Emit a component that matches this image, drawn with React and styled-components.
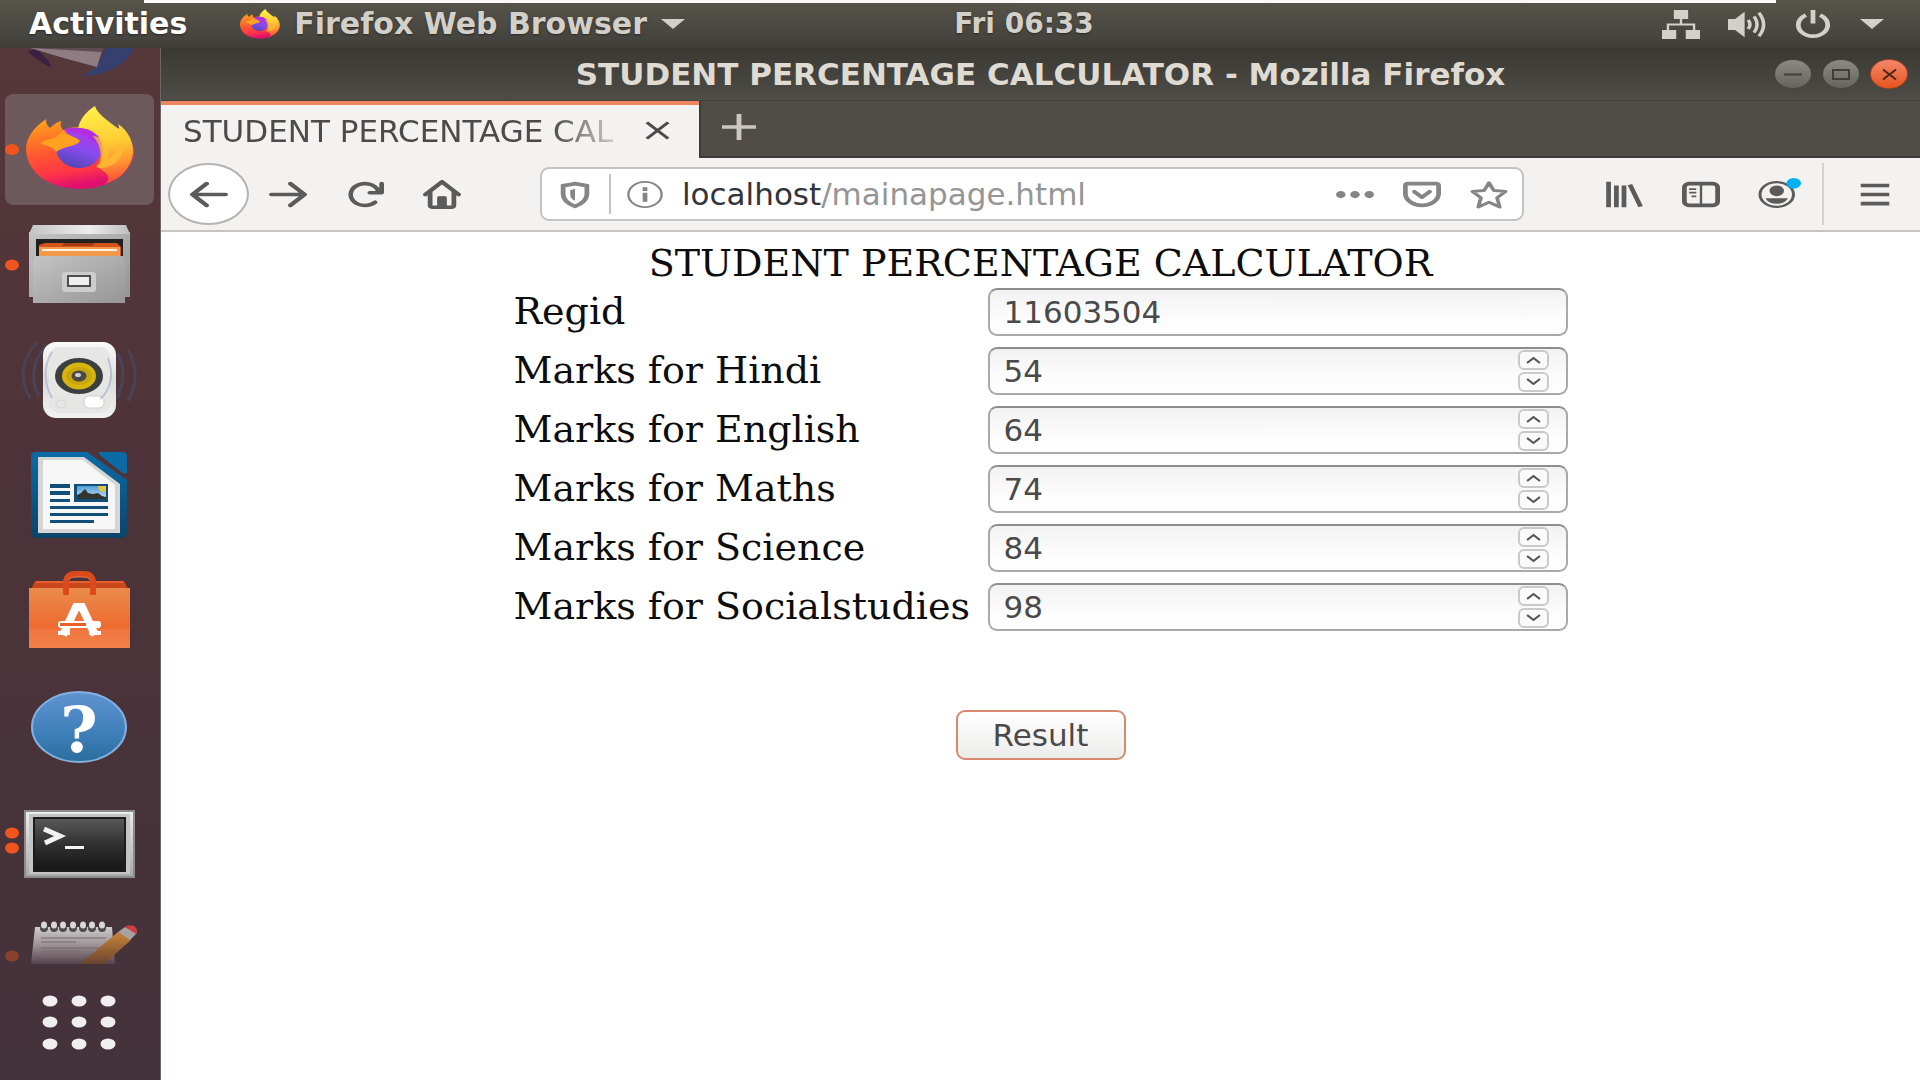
import React, { useState } from 'react';
import styled, { createGlobalStyle, css } from 'styled-components';

const GlobalStyle = createGlobalStyle`
  *, *::before, *::after { box-sizing: border-box; }
  body { margin: 0; background: #fff; }
  button { font: inherit; color: inherit; border: 0; padding: 0; background: none; }
`;

const SANS = "'DejaVu Sans', 'Noto Sans', sans-serif";
const SERIF = "'DejaVu Serif', serif";

/* ---------- desktop ---------- */

const Desktop = styled.div`
  min-height: 100vh;
  display: grid;
  grid-template-rows: 48px 1fr;
  font-family: ${SANS};
  background: #fff;
`;

const TopPanel = styled.header`
  display: flex;
  flex-direction: column;
  background: linear-gradient(#57544a, #45443e 80%, #3e3d38);
  color: #d3d0c9;
  font-size: 30px;
  line-height: 36px;
  font-weight: bold;
`;

const PanelEdge = styled.div`
  height: 3px;
  margin: 0 144px;
  background: #fafafa;
`;

const PanelRow = styled.div`
  display: flex;
  align-items: flex-start;
  height: 45px;
  padding-top: 3px;
`;

const PanelLeft = styled.div`
  flex: 1 0 164px;
  display: flex;
  align-items: center;
  gap: 14px;
  padding-left: 29px;
`;

const PanelRight = styled.div`
  flex: 1 0 0;
  display: flex;
  align-items: center;
  justify-content: flex-end;
  gap: 28px;
  height: 36px;
  padding-right: 36px;
`;

const PanelButton = styled.button`
  display: flex;
  align-items: center;
  gap: 14px;
  color: ${(p) => (p.$bright ? '#fff' : '#d3d0c9')};
  font-size: ${(p) => (p.$small ? '28px' : '30px')};
  text-shadow: 0 1px 2px #2a2926;
  margin-right: ${(p) => (p.$bright ? '39px' : '0')};
`;

const Body = styled.div`
  display: grid;
  grid-template-columns: 161px minmax(0, 1fr);
`;

/* ---------- dock ---------- */

const Dock = styled.nav`
  display: flex;
  flex-direction: column;
  background: linear-gradient(#56373a, #4c3339 45%, #44323a);
  border-right: 1px solid #6d6568;
`;

const DockItem = styled.button`
  display: block;
  height: ${(p) => p.$height || 116}px;
  overflow: hidden;

  svg { display: block; width: 160px; height: 100%; }
`;

/* ---------- browser window ---------- */

const Window = styled.div`
  display: flex;
  flex-direction: column;
  min-width: 0;
`;

const TitleBar = styled.div`
  display: grid;
  grid-template-columns: 1fr auto 1fr;
  align-items: center;
  height: 52px;
  padding-right: 12px;
  background: linear-gradient(#3a3934, #4c4a44 90%, #504d46);
  color: #dfdbd2;
`;

const WindowTitle = styled.h1`
  grid-column: 2;
  margin: 0 0 0 12px;
  font-size: 31px;
  line-height: 36px;
  font-weight: bold;
`;

const WindowButtons = styled.div`
  display: flex;
  justify-content: flex-end;
  gap: 10px;
`;

const WindowButton = styled.button`
  width: 38px;
  height: 30px;
  border-radius: 50%;
  border: 1px solid ${(p) => (p.$close ? '#a8431f' : '#45443f')};
  background: ${(p) => (p.$close ? 'linear-gradient(#f2886a, #e9541f)' : 'linear-gradient(#8b8a83, #65645e)')};

  svg { display: block; width: 36px; height: 28px; }
`;

const TabStrip = styled.div`
  display: flex;
  height: 58px;
  background: #504d46;
  border-top: 1px solid #46433d;
`;

const Tab = styled.div`
  display: flex;
  align-items: center;
  width: 538px;
  padding: 0 29px 2px 22px;
  background: #f3f2f1;
  border-top: 4px solid #ee8561;
  color: #4b4b4b;
`;

const TabLabel = styled.span`
  flex: 1;
  white-space: nowrap;
  font-size: 31px;
  line-height: 36px;
  margin-right: 12px;
  mask-image: linear-gradient(to right, #000 82%, transparent);
`;

const TabStripRest = styled.div`
  flex: 1;
  display: flex;
  align-items: center;
  padding: 0 21px 4px;
  border-left: 2px solid #3c3b37;
  border-bottom: 2px solid #3c3b37;
`;

const NewTabButton = styled.button`
  color: #cbc7bf;
`;

const Toolbar = styled.div`
  display: flex;
  align-items: center;
  height: 74px;
  padding: 0 7px;
  background: #f3f2f1;
  border-bottom: 2px solid #c7c5c3;
  color: #5b5b5b;
`;

const BackButton = styled.button`
  display: grid;
  place-items: center;
  width: 81px;
  height: 62px;
  border: 2px solid #b5b3b1;
  border-radius: 50%;
  background: #fff;
`;

const ToolButton = styled.button`
  display: grid;
  place-items: center;
  width: 77px;
  height: 62px;
`;

const ToolDivider = styled.div`
  width: 2px;
  height: 62px;
  margin: 0 12px 0 6px;
  background: #d3d1cf;
`;

const AddressBar = styled.div`
  flex: 1;
  display: flex;
  align-items: center;
  height: 54px;
  margin: 0 61px 0 60px;
  padding: 0 14px;
  background: #fff;
  border: 2px solid #c6c4c2;
  border-radius: 9px;
  color: #858585;
`;

const AddressDivider = styled.div`
  width: 2px;
  height: 40px;
  margin: 0 15px;
  background: #c2c2c2;
`;

const AddressText = styled.span`
  flex: 1;
  margin-left: 18px;
  font-size: 31px;
  line-height: 40px;
  color: #959595;

  strong { font-weight: normal; color: #33333b; }
`;

const AddressActions = styled.div`
  display: flex;
  gap: 29px;
`;

/* ---------- page ---------- */

const Page = styled.main`
  flex: 1;
  display: flex;
  justify-content: center;
  padding: 10px 16px;
  background: #fff;
  color: #0d0d0d;
  font-family: ${SERIF};
`;

const Form = styled.form`
  display: flex;
  flex-direction: column;
  align-items: center;
`;

const FormTitle = styled.h2`
  margin: 0 0 4px;
  font-size: 38px;
  line-height: 42px;
  font-weight: normal;
`;

const Fields = styled.div`
  display: grid;
  grid-template-columns: 474px 580px;
  row-gap: 11px;
`;

const FieldLabel = styled.label`
  font-size: 38px;
  line-height: 46px;
  white-space: nowrap;
`;

const FieldBox = styled.div`
  display: flex;
  height: 48px;
  padding-right: 17px;
  border: 2px solid #a9a9a9;
  border-top-color: #8d8d8d;
  border-radius: 9px;
  background: linear-gradient(#f2f2f2, #fdfdfd 70%);
`;

const FieldInput = styled.input`
  flex: 1;
  min-width: 0;
  border: 0;
  outline: 0;
  padding: 0 14px;
  background: none;
  color: #4a4a4a;
  font-family: ${SANS};
  font-size: 31px;
  appearance: textfield;

  &::-webkit-inner-spin-button, &::-webkit-outer-spin-button {
    appearance: none;
    margin: 0;
  }
`;

const Stepper = styled.div`
  display: flex;
  flex-direction: column;
  justify-content: space-between;
  padding: 1px 0;
`;

const StepButton = styled.button`
  display: grid;
  place-items: center;
  width: 31px;
  height: 20px;
  border: 2px solid #c9c9c9;
  border-radius: 6px;
  background: #fafafa;
`;

const ResultButton = styled.button`
  width: 170px;
  height: 50px;
  margin-top: 79px;
  border: 2px solid #d58a70;
  border-radius: 9px;
  background: linear-gradient(#fff, #ececeb);
  color: #4a4a4a;
  font-family: ${SANS};
  font-size: 31px;
`;

/* ---------- icons ---------- */

const GlyphSvg = styled.svg`
  display: block;
  flex: none;
  width: ${(p) => p.$w || 38}px;
  height: ${(p) => p.$h || 29}px;
  ${(p) => p.$line && css`
    fill: none;
    stroke: currentColor;
    stroke-width: ${p.$line};
  `}
`;

const Glyph = ({ children, w, h, line, box = '0 0 16 16' }) => (
  <GlyphSvg $w={w} $h={h} $line={line} viewBox={box} preserveAspectRatio="none" fill="currentColor" aria-hidden="true">
    {children}
  </GlyphSvg>
);

const Caret = () => (
  <Glyph w={24} h={10} box="0 0 10 5"><path d="M0 0h10L5 5z" /></Glyph>
);

const FirefoxArt = ({ id }) => (
  <g>
    <defs>
      <linearGradient id={`${id}-body`} x1="0" y1="0" x2="0.25" y2="1">
        <stop offset="0.1" stopColor="#ff9a1c" />
        <stop offset="0.5" stopColor="#ff5a30" />
        <stop offset="0.8" stopColor="#ff3546" />
        <stop offset="1" stopColor="#e0106f" />
      </linearGradient>
      <linearGradient id={`${id}-flame`} x1="0.4" y1="0" x2="0.5" y2="1">
        <stop offset="0" stopColor="#fff04a" />
        <stop offset="0.45" stopColor="#ffcf35" />
        <stop offset="0.75" stopColor="#ff9330" />
        <stop offset="1" stopColor="#ff4a3c" />
      </linearGradient>
      <linearGradient id={`${id}-globe`} x1="0.7" y1="0" x2="0.3" y2="1">
        <stop offset="0" stopColor="#b833e1" />
        <stop offset="0.5" stopColor="#8a4bf0" />
        <stop offset="1" stopColor="#5146b4" />
      </linearGradient>
    </defs>
    <path fill={`url(#${id}-body)`} d="M26 150C26 138 33 128 46 119C46 123 47 126 50 128C53 125 57 122 61 121C60 125 61 128 63 130C76 125 96 126 112 132C126 138 134 142 134 152C132 174 108 189 80 189C50 189 27 173 26 150Z" />
    <path fill={`url(#${id}-flame)`} d="M78 130C79 119 87 111 95 106C97 113 106 120 119 129C119 127 119 125 118 124C128 130 134 143 133 153C131 168 121 179 105 184C114 176 103 171 96 166C108 160 103 137 93 132C88 128 82 128 78 130Z" />
    <ellipse cx="79" cy="148" rx="23" ry="20" fill={`url(#${id}-globe)`} />
    <path fill="#b32ee0" d="M63 130C72 126 86 127 94 134C97 136 99 136 101 136L92 137C97 141 99 145 100 149C92 136 78 133 63 130Z" />
    <path fill="#ffa21f" d="M40 143C48 138 57 140 63 130C67 136 76 136 80 141C76 147 66 145 56 152C54 147 46 146 40 143Z" />
    <path fill="#ffbd33" opacity="0.75" d="M93 136C104 137 111 148 108 159C116 154 122 147 121 137C128 154 116 169 97 168C103 160 102 146 93 136Z" />
  </g>
);

const RunDot = ({ y, faded }) => <ellipse cx="12" cy={y} rx="7" ry="5.500" fill="#f1551f" opacity={faded ? 0.4 : 1} />;

/* Every launcher is drawn on one tall dock canvas; `top` picks the slice it shows. */
const Launcher = ({ label, top, height = 116, children }) => (
  <DockItem $height={height} aria-label={label}>
    <svg viewBox={`0 ${top} 160 ${height}`} preserveAspectRatio="none" aria-hidden="true">{children}</svg>
  </DockItem>
);

const DockBar = () => (
  <Dock aria-label="Dock">
    <Launcher label="Thunderbird Mail" top={48} height={45}>
      <path fill="#3a2142" d="M28 52C35 58 43 64 52 68L48 60L36 48Z" />
      <path fill="#35406f" d="M106 48H134C127 64 107 76 81 76C91 72 92 69 96 67C101 60 103 55 106 48Z" />
      <path fill="#8f7c82" d="M30 48H103L97 67Q62 58 30 48Z" />
      <path fill="#5f4a54" d="M30 48H103L102 52Z" />
    </Launcher>
    <Launcher label="Firefox Web Browser" top={93}>
      <rect x="5" y="94" width="149" height="111" rx="8" fill="#6d595c" />
      <RunDot y={149.5} />
      <FirefoxArt id="dock-fx" />
    </Launcher>
    <Launcher label="Files" top={209}>
      <defs>
        <linearGradient id="cab" x1="0" y1="0" x2="1" y2="1">
          <stop offset="0" stopColor="#c4c4c4" /><stop offset="1" stopColor="#959595" />
        </linearGradient>
        <linearGradient id="cab-top" x1="0" y1="0" x2="1" y2="0">
          <stop offset="0" stopColor="#c4c4c4" /><stop offset="0.6" stopColor="#ededed" /><stop offset="1" stopColor="#bdbdbd" />
        </linearGradient>
      </defs>
      <RunDot y={265} />
      <path fill="url(#cab)" d="M29 232H130V297H29Z" />
      <path fill="url(#cab-top)" d="M33 225H126L130 234H29Z" />
      <rect x="36" y="239" width="87" height="22" fill="#23211f" />
      <path fill="#d4551a" d="M45 243H117L121 247V258H39V245Z" />
      <path fill="#a43c10" d="M64 243H95L92 246H62Z" />
      <path fill="#f29a4b" d="M39 247H120V258H39Z" />
      <rect x="42" y="249" width="75" height="2" fill="#fff2dc" />
      <path fill="url(#cab)" d="M35 256H123L125 260V303H33V260Z" />
      <rect x="62" y="272" width="34" height="20" rx="3" fill="#cdcdcd" />
      <rect x="68" y="276" width="22" height="10" fill="#f0f0f0" stroke="#4e4e4e" strokeWidth="2" />
    </Launcher>
    <Launcher label="Rhythmbox" top={325}>
      <defs>
        <linearGradient id="spk" x1="0" y1="0" x2="0" y2="1">
          <stop offset="0" stopColor="#fafafa" /><stop offset="0.5" stopColor="#dcdcdc" /><stop offset="1" stopColor="#f1f1f1" />
        </linearGradient>
      </defs>
      <g fill="none" stroke="#465079" strokeWidth="3" opacity="0.5">
        <path d="M38 342C20 358 20 382 30 398M46 346C31 362 31 382 39 396M118 354C125 368 124 384 117 398M128 350C138 366 137 386 128 401" />
      </g>
      <rect x="43" y="342" width="73" height="76" rx="13" fill="url(#spk)" />
      <rect x="49" y="347" width="61" height="66" rx="10" fill="#e6e6e4" />
      <ellipse cx="79" cy="376" rx="24" ry="18" fill="#3b3f40" />
      <ellipse cx="79" cy="376" rx="17" ry="13.500" fill="#d8b50f" />
      <ellipse cx="79" cy="376" rx="13" ry="9" fill="#c9a70c" />
      <ellipse cx="79" cy="376" rx="7.500" ry="5.500" fill="#4a4a4a" />
      <ellipse cx="78" cy="375" rx="3" ry="2" fill="#d0d0d0" />
      <ellipse cx="61" cy="404" rx="5" ry="4" fill="none" stroke="#d2d2d0" />
      <rect x="84" y="396" width="20" height="12" rx="5" fill="#fff" stroke="#cfcfcf" />
      <g fill="none" stroke="#8f9fc4" strokeWidth="2" opacity="0.5">
        <path d="M52 352C43 366 44 384 52 398M108 358C114 374 111 390 100 399" />
      </g>
    </Launcher>
    <Launcher label="LibreOffice Writer" top={441}>
      <defs>
        <linearGradient id="lo" x1="0" y1="0" x2="0" y2="1">
          <stop offset="0" stopColor="#0b6ba6" /><stop offset="1" stopColor="#0b4468" />
        </linearGradient>
        <linearGradient id="sky" x1="0" y1="0" x2="0" y2="1">
          <stop offset="0" stopColor="#4f9bd8" /><stop offset="1" stopColor="#cfe6f5" />
        </linearGradient>
      </defs>
      <path fill="url(#lo)" d="M36 452H87L127 480V533Q127 538 121 538H37Q31 538 31 533V457Q31 452 36 452Z" />
      <path fill="#0b6ba6" d="M99 452H122Q127 452 127 457V473Q123 474 120 471L101 456Q98 454 99 452Z" />
      <path fill="#d5d5d5" d="M38 457H84L120 484V533H38Z" />
      <path fill="#f7f7f7" d="M43 460H83L115 485V529H43Z" />
      <g fill="#114f79">
        <path d="M50 484h20v4H50zM50 491h20v4H50zM50 499h20v3H50zM50 506h58v3H50zM50 513h58v3H50zM50 520h44v3H50zM74 484h34v18H74z" />
      </g>
      <rect x="77" y="486" width="29" height="13" fill="url(#sky)" />
      <path fill="#e3c63a" d="M98 486h8v6q-8 0-8-6z" />
      <path fill="#33332f" d="M77 499V495L81 493L85 489L88 493L93 494L98 493L102 496L106 497V499Z" />
    </Launcher>
    <Launcher label="Ubuntu Software" top={557}>
      <defs>
        <linearGradient id="bag" x1="0" y1="0" x2="0" y2="1">
          <stop offset="0" stopColor="#ea8b4d" /><stop offset="0.66" stopColor="#ee6a2f" /><stop offset="0.7" stopColor="#f0763f" /><stop offset="1" stopColor="#f08048" />
        </linearGradient>
      </defs>
      <path fill="#c9461b" d="M35 581H124L128 589H31Z" />
      <path fill="none" stroke="#e5602e" strokeWidth="2" d="M36 582H123" />
      <rect x="29" y="588" width="101" height="60" fill="url(#bag)" />
      <path fill="none" stroke="#da4a1c" strokeWidth="6" d="M66 595V581Q67 574 75 574H84Q92 574 93 581V595" />
      <path fill="none" stroke="#f07a4c" strokeWidth="1" d="M69 580Q70 577 76 577H83Q89 577 90 580" />
      <path fill="none" stroke="#fff" strokeWidth="8" d="M63 635L76 607H82L95 635" />
      <path fill="#fff" d="M58 631h12v4H58zM89 631h12v4H89z" />
      <rect x="58" y="621" width="43" height="7" rx="3" fill="#fff" />
      <rect x="60" y="623" width="26" height="3" fill="#e9602a" />
    </Launcher>
    <Launcher label="Help" top={673}>
      <defs>
        <linearGradient id="help" x1="0" y1="0" x2="0" y2="1">
          <stop offset="0" stopColor="#5f93d3" /><stop offset="0.6" stopColor="#3e7fb8" /><stop offset="1" stopColor="#2a6d9d" />
        </linearGradient>
      </defs>
      <ellipse cx="79" cy="727" rx="47" ry="35" fill="url(#help)" stroke="#83b0dd" strokeWidth="2" />
      <text x="79" y="752" textAnchor="middle" fill="#fff" fontFamily="DejaVu Serif, serif" fontWeight="bold" fontSize="64">?</text>
    </Launcher>
    <Launcher label="Terminal" top={789}>
      <defs>
        <linearGradient id="term" x1="0" y1="0" x2="0" y2="1">
          <stop offset="0" stopColor="#5a5a5a" /><stop offset="0.5" stopColor="#303030" /><stop offset="1" stopColor="#161616" />
        </linearGradient>
        <linearGradient id="bezel" x1="0" y1="0" x2="0" y2="1">
          <stop offset="0" stopColor="#ededed" /><stop offset="1" stopColor="#a9a9a9" />
        </linearGradient>
      </defs>
      <RunDot y={833} />
      <RunDot y={848} />
      <rect x="25" y="811" width="109" height="66" fill="url(#bezel)" stroke="#8b8b8b" strokeWidth="2" />
      <rect x="29" y="814" width="101" height="60" fill="#c4c4c4" />
      <rect x="34" y="818" width="91" height="53" fill="url(#term)" stroke="#1c1c1c" strokeWidth="2" />
      <path fill="none" stroke="#f2f2f2" strokeWidth="5" d="M44 829L60 836L45 843" />
      <rect x="65" y="846" width="19" height="3" fill="#f2f2f2" />
    </Launcher>
    <Launcher label="Text Editor" top={905} height={59}>
      <defs>
        <linearGradient id="pad" x1="0" y1="0" x2="0" y2="1">
          <stop offset="0" stopColor="#cfcccc" /><stop offset="0.5" stopColor="#9b9094" /><stop offset="1" stopColor="#54434a" />
        </linearGradient>
        <linearGradient id="pencil" gradientUnits="userSpaceOnUse" x1="0" y1="932" x2="0" y2="964">
          <stop offset="0" stopColor="#c98538" /><stop offset="1" stopColor="#6b4430" />
        </linearGradient>
      </defs>
      <RunDot y={956} faded />
      <path fill="url(#pad)" d="M35 927H112L115 964H31Z" />
      <path stroke="#77696e" strokeWidth="1" d="M41 938H106M41 942H76M41 948H108M41 951H80M41 957H84" />
      {[44, 54, 63, 73, 83, 92, 102].map((x) => (
        <g key={x}>
          <ellipse cx={x} cy="928" rx="4" ry="4" fill="#4d4a4b" />
          <ellipse cx={x} cy="925" rx="3" ry="3.500" fill="#d8d8d8" />
        </g>
      ))}
      <path fill="url(#pencil)" d="M118 932L131 940L104 964H80Z" />
      <path fill="#a7a2a2" d="M118 932L125 927L137 933L130 940Z" />
      <path fill="#cf3c43" d="M125 927Q129 924 134 926Q139 930 136 934Z" />
    </Launcher>
    <Launcher label="Show Applications" top={964}>
      {[1001, 1022, 1044].map((y) => [50, 79, 108].map((x) => (
        <ellipse key={`${x}-${y}`} cx={x} cy={y} rx="7.500" ry="5.500" fill="#f0eeee" />
      )))}
    </Launcher>
  </Dock>
);

/* ---------- fields ---------- */

const subjects = [
  { id: 'hindi', label: 'Marks for Hindi', value: 54 },
  { id: 'english', label: 'Marks for English', value: 64 },
  { id: 'maths', label: 'Marks for Maths', value: 74 },
  { id: 'science', label: 'Marks for Science', value: 84 },
  { id: 'social', label: 'Marks for Socialstudies', value: 98 },
];

const Chevron = ({ down }) => (
  <Glyph w={15} h={8} line={2} box="0 0 14 8">
    <path d={down ? 'M1 1L7 6L13 1' : 'M1 7L7 2L13 7'} stroke="#555" />
  </Glyph>
);

const MarkField = ({ id, label, value }) => {
  const [mark, setMark] = useState(value);
  return (
    <>
      <FieldLabel htmlFor={id}>{label}</FieldLabel>
      <FieldBox>
        <FieldInput id={id} type="number" value={mark} onChange={(e) => setMark(e.target.value)} />
        <Stepper>
          <StepButton type="button" aria-label={`Increase ${label}`} onClick={() => setMark(Number(mark) + 1)}><Chevron /></StepButton>
          <StepButton type="button" aria-label={`Decrease ${label}`} onClick={() => setMark(Number(mark) - 1)}><Chevron down /></StepButton>
        </Stepper>
      </FieldBox>
    </>
  );
};

export default function App() {
  return (
    <Desktop>
      <GlobalStyle />
      <TopPanel>
        <PanelEdge />
        <PanelRow>
          <PanelLeft>
            <PanelButton $bright>Activities</PanelButton>
            <PanelButton>
              <Glyph w={40} h={30} box="26 106 108 84"><FirefoxArt id="panel-fx" /></Glyph>
              Firefox Web Browser
              <Caret />
            </PanelButton>
          </PanelLeft>
          <PanelButton $small>Fri 06:33</PanelButton>
          <PanelRight>
            <Glyph>
              <path d="M5 0h6v5H8.500v2.500H14V11h2v5h-6v-5h3V8.500H3V11h3v5H0v-5h2V7.500h5.500V5H5z" />
            </Glyph>
            <Glyph>
              <path d="M0 5h3l4-4v14l-4-4H0z" />
              <path d="M8.500 5.500q1.500 2.500 0 5M11 3.500q2.500 4.500 0 9M13 1.500q4 6.500 0 13" fill="none" stroke="currentColor" strokeWidth="1.500" />
            </Glyph>
            <Glyph>
              <path d="M5 2.800a6.200 6.200 0 1 0 6 0M8 0v7.500" fill="none" stroke="currentColor" strokeWidth="2" />
            </Glyph>
            <Caret />
          </PanelRight>
        </PanelRow>
      </TopPanel>

      <Body>
        <DockBar />
        <Window>
          <TitleBar>
            <WindowTitle>STUDENT PERCENTAGE CALCULATOR - Mozilla Firefox</WindowTitle>
            <WindowButtons>
              <WindowButton aria-label="Minimize">
                <svg viewBox="0 0 36 28"><path d="M9 14.500h18" stroke="#3f3e3a" strokeWidth="2" /></svg>
              </WindowButton>
              <WindowButton aria-label="Maximize">
                <svg viewBox="0 0 36 28"><rect x="10" y="10" width="16" height="9" fill="none" stroke="#3f3e3a" strokeWidth="2" /></svg>
              </WindowButton>
              <WindowButton $close aria-label="Close window">
                <svg viewBox="0 0 36 28"><path d="M12 9.500l13 10M25 9.500l-13 10" stroke="#4b2616" strokeWidth="2" /></svg>
              </WindowButton>
            </WindowButtons>
          </TitleBar>

          <TabStrip>
            <Tab>
              <TabLabel>STUDENT PERCENTAGE CAL</TabLabel>
              <button aria-label="Close tab">
                <Glyph w={25} h={19} line={2} box="0 0 14 14"><path d="M1 1l12 12M13 1L1 13" /></Glyph>
              </button>
            </Tab>
            <TabStripRest>
              <NewTabButton aria-label="New tab">
                <Glyph w={34} h={26} line={2} box="0 0 14 14"><path d="M7 0v14M0 7h14" /></Glyph>
              </NewTabButton>
            </TabStripRest>
          </TabStrip>

          <Toolbar>
            <BackButton aria-label="Back">
              <Glyph><path d="M15 7H3.414l4.293-4.293a1 1 0 0 0-1.414-1.414l-6 6a1 1 0 0 0 0 1.414l6 6a1 1 0 0 0 1.414-1.414L3.414 9H15a1 1 0 0 0 0-2z" /></Glyph>
            </BackButton>
            <ToolButton aria-label="Forward">
              <Glyph><path d="M1 7h11.586L8.293 2.707a1 1 0 0 1 1.414-1.414l6 6a1 1 0 0 1 0 1.414l-6 6a1 1 0 0 1-1.414-1.414L12.586 9H1a1 1 0 0 1 0-2z" /></Glyph>
            </ToolButton>
            <ToolButton aria-label="Reload">
              <Glyph><path d="M15 1a1 1 0 0 0-1 1v2.418A6.995 6.995 0 1 0 8 15a6.954 6.954 0 0 0 4.950-2.050 1 1 0 0 0-1.414-1.414A5.019 5.019 0 1 1 12.549 6H10a1 1 0 0 0 0 2h5a1 1 0 0 0 1-1V2a1 1 0 0 0-1-1z" /></Glyph>
            </ToolButton>
            <ToolButton aria-label="Home">
              <Glyph>
                <path d="M15.707 7.293l-7-7a1 1 0 0 0-1.414 0l-7 7a1 1 0 0 0 1.414 1.414L2 8.414V14a2 2 0 0 0 2 2h8a2 2 0 0 0 2-2V8.414l.293.293a1 1 0 0 0 1.414-1.414zM12 14h-2v-4a1 1 0 0 0-1-1H7a1 1 0 0 0-1 1v4H4V6.414l4-4 4 4z" />
                <path d="M6 9h4v5H6z" opacity="0.6" />
              </Glyph>
            </ToolButton>

            <AddressBar>
              <Glyph>
                <path d="M8 2L13 3.200V8C13 11 11 13 8 14.500C5 13 3 11 3 8V3.200Z" fill="none" stroke="currentColor" strokeWidth="2" />
                <path d="M8 5v6.500C6.500 10.500 6 9.500 6 8V5.500z" />
              </Glyph>
              <AddressDivider />
              <Glyph>
                <circle cx="8" cy="8" r="7" fill="none" stroke="currentColor" />
                <path d="M7 4h2v2H7zM7 7h2v5H7z" />
              </Glyph>
              <AddressText><strong>localhost</strong>/mainapage.html</AddressText>
              <AddressActions>
                <Glyph><circle cx="2" cy="8" r="2" /><circle cx="8" cy="8" r="2" /><circle cx="14" cy="8" r="2" /></Glyph>
                <Glyph line={2}>
                  <path d="M2 2h12a1 1 0 0 1 1 1v4.500a7 6.500 0 0 1-14 0V3a1 1 0 0 1 1-1z" />
                  <path d="M4.800 6.500L8 9.500L11.200 6.500" strokeLinecap="round" strokeLinejoin="round" />
                </Glyph>
                <Glyph>
                  <path d="M8 1.500L10 5.800L15 6.300L11.400 9.800L12.500 14.900L8 12.300L3.500 14.900L4.600 9.800L1 6.300L6 5.800Z" fill="none" stroke="currentColor" strokeWidth="1.600" strokeLinejoin="round" />
                </Glyph>
              </AddressActions>
            </AddressBar>

            <ToolButton aria-label="Library">
              <Glyph line={2}><path d="M1.500 1v14M4.800 3v12M8 3v12M10.500 2.500L15 14.700" /></Glyph>
            </ToolButton>
            <ToolButton aria-label="Sidebars">
              <Glyph>
                <rect x="1" y="2" width="14" height="12" rx="2" fill="none" stroke="currentColor" strokeWidth="2" />
                <path d="M7.500 2h1v12h-1zM3 4.500h3v1H3zM3 6.500h3v1H3zM4 8.500h2v1H4z" />
              </Glyph>
            </ToolButton>
            <ToolButton aria-label="Account">
              <Glyph w={50} h={33} box="-2 -1 20 18">
                <circle cx="7.500" cy="8" r="6.700" fill="none" stroke="currentColor" strokeWidth="1.200" />
                <circle cx="7.500" cy="6" r="2.900" />
                <path d="M3 10h9q-1.200 3-4.500 3T3 10z" />
                <circle cx="14.300" cy="1.900" r="2.900" fill="#00b0f4" />
              </Glyph>
            </ToolButton>
            <ToolDivider />
            <ToolButton aria-label="Open menu">
              <Glyph><path d="M2 2h12v2H2zM2 7h12v2H2zM2 12h12v2H2z" /></Glyph>
            </ToolButton>
          </Toolbar>

          <Page>
            <Form onSubmit={(e) => e.preventDefault()}>
              <FormTitle>STUDENT PERCENTAGE CALCULATOR</FormTitle>
              <Fields>
                <FieldLabel htmlFor="regid">Regid</FieldLabel>
                <FieldBox><FieldInput id="regid" type="text" defaultValue="11603504" /></FieldBox>
                {subjects.map((s) => <MarkField key={s.id} {...s} />)}
              </Fields>
              <ResultButton type="submit">Result</ResultButton>
            </Form>
          </Page>
        </Window>
      </Body>
    </Desktop>
  );
}
